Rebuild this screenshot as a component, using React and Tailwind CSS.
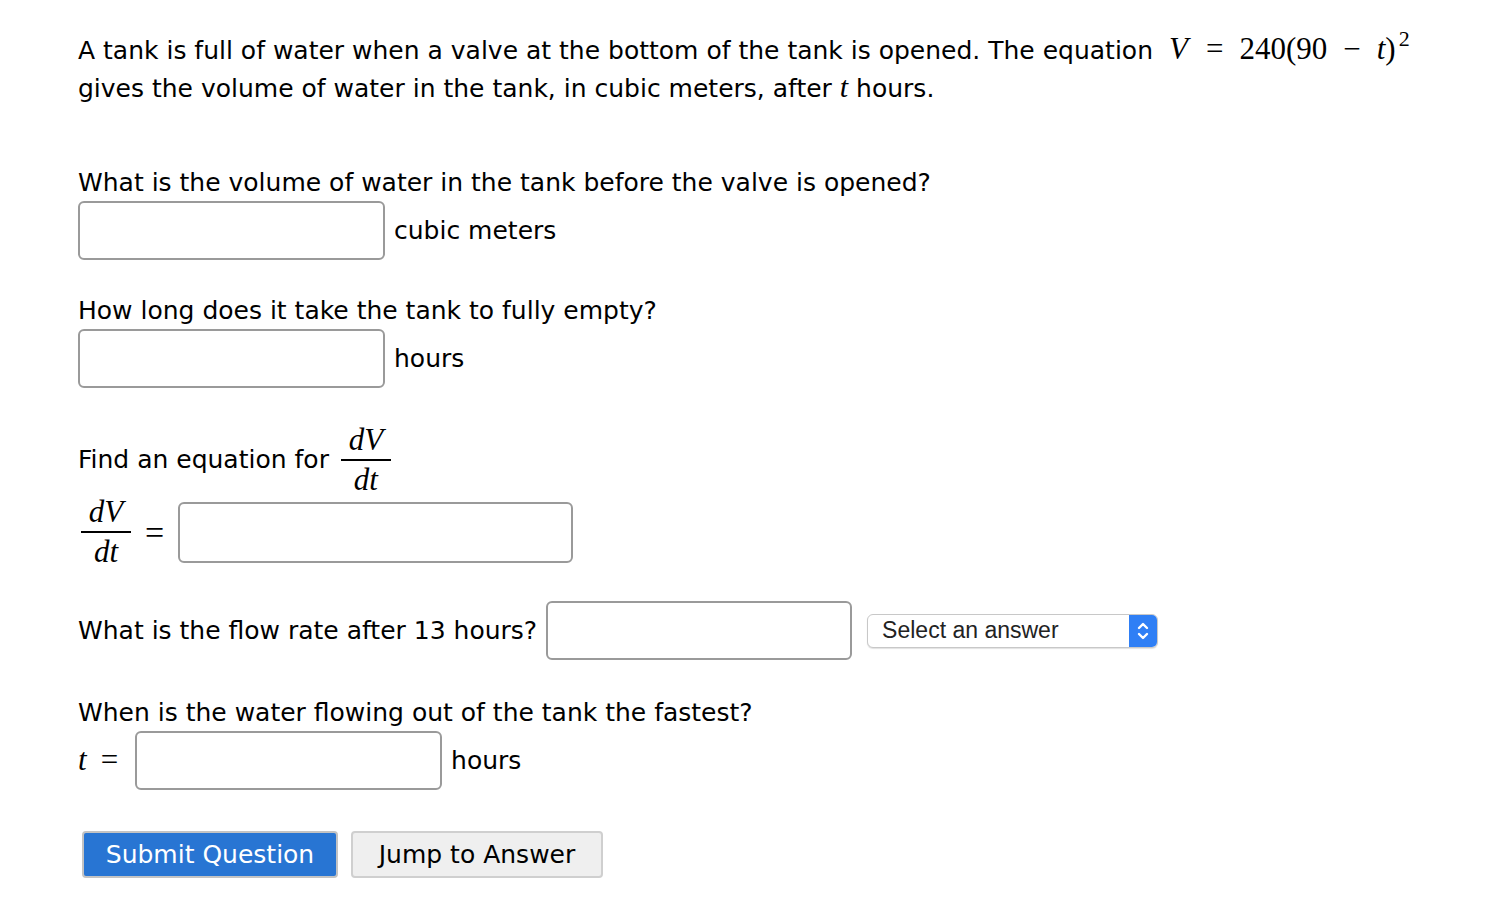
import React from "react";

const mathFont = { fontFamily: '"Liberation Serif", "DejaVu Serif", serif' };

const Frac = ({ top, bottom, className = "" }) => (
  <span className={"inline-flex flex-col items-center align-middle " + className} style={mathFont}>
    <span className="italic px-[4px] leading-[38px]">{top}</span>
    <span className="block w-full h-[2px] bg-black"></span>
    <span className="italic px-[4px] leading-[38px]">{bottom}</span>
  </span>
);

const TextBox = ({ className = "w-[307px]" }) => (
  <input
    type="text"
    className={"h-[59px] rounded-[6px] border-2 border-[#9a9a9a] bg-white outline-none " + className}
  />
);

const App = () => {
  return (
    <div
      className="min-h-[924px] bg-white text-black pl-[78px] pt-[32px] text-[25px]"
      style={{ fontFamily: '"DejaVu Sans", Verdana, sans-serif' }}
    >
      <p className="leading-[38px] w-[1380px]">
        A tank is full of water when a valve at the bottom of the tank is opened. The equation{" "}
        <span style={mathFont} className="text-[31px] leading-none ml-[8px]">
          <i>V</i>
          <span className="ml-[18px] mr-[16px]">=</span>240(90<span className="mx-[16px]">−</span>
          <i>t</i>)
          <sup className="text-[22px] leading-none relative -top-[13px] ml-[3px]">2</sup>
        </span>
        <br />
        gives the volume of water in the tank, in cubic meters, after{" "}
        <i style={mathFont} className="text-[30px] leading-none">t</i> hours.
      </p>

      <div className="mt-[57px]">
        <div className="leading-[36px]">What is the volume of water in the tank before the valve is opened?</div>
        <div className="flex items-center gap-[9px]">
          <TextBox />
          <span>cubic meters</span>
        </div>
      </div>

      <div className="mt-[33px]">
        <div className="leading-[36px]">How long does it take the tank to fully empty?</div>
        <div className="flex items-center gap-[9px]">
          <TextBox />
          <span>hours</span>
        </div>
      </div>

      <div className="mt-[33px]">
        <div className="flex items-center gap-[12px]">
          <span>Find an equation for</span>
          <Frac top="dV" bottom="dt" className="text-[31px] w-[50px]" />
        </div>
        <div className="flex items-center -mt-[6px]">
          <Frac top="dV" bottom="dt" className="text-[31px] w-[50px] ml-[3px]" />
          <span style={mathFont} className="text-[34px] ml-[14px] mr-[14px]">=</span>
          <TextBox className="w-[395px] h-[61px]" />
        </div>
      </div>

      <div className="flex items-center mt-[30px]">
        <span>What is the flow rate after 13 hours?</span>
        <TextBox className="w-[306px] ml-[9px]" />
        <div className="ml-[15px] flex items-center w-[291px] h-[34px] rounded-[6px] border border-[#c8c8c8] bg-white shadow-[0_1px_1px_rgba(0,0,0,0.12)] overflow-hidden">
          <span
            className="flex-1 pl-[14px] text-[23px] text-[#222]"
            style={{ fontFamily: '"Liberation Sans", Arial, sans-serif' }}
          >
            Select an answer
          </span>
          <span className="w-[28px] h-full bg-[#2f7ff5] flex items-center justify-center">
            <svg width="14" height="22" viewBox="0 0 14 22" fill="none" stroke="white" strokeWidth="2.4" strokeLinecap="round" strokeLinejoin="round">
              <path d="M3 8 L7 4 L11 8" />
              <path d="M3 14 L7 18 L11 14" />
            </svg>
          </span>
        </div>
      </div>

      <div className="mt-[35px]">
        <div className="leading-[36px]">When is the water flowing out of the tank the fastest?</div>
        <div className="flex items-center">
          <span style={mathFont} className="text-[31px]">
            <i>t</i>
            <span className="ml-[14px]">=</span>
          </span>
          <TextBox className="w-[307px] ml-[17px]" />
          <span className="ml-[9px]">hours</span>
        </div>
      </div>

      <div className="flex gap-[13px] mt-[41px] ml-[4px]">
        <button className="w-[256px] h-[47px] rounded-[4px] border-2 border-[#c3c3c3] bg-[#2875d3] text-white text-[25px]">
          Submit Question
        </button>
        <button className="w-[252px] h-[47px] rounded-[4px] border-2 border-[#cfcfcf] bg-[#efefef] text-black text-[25px]">
          Jump to Answer
        </button>
      </div>
    </div>
  );
};

export default App;
